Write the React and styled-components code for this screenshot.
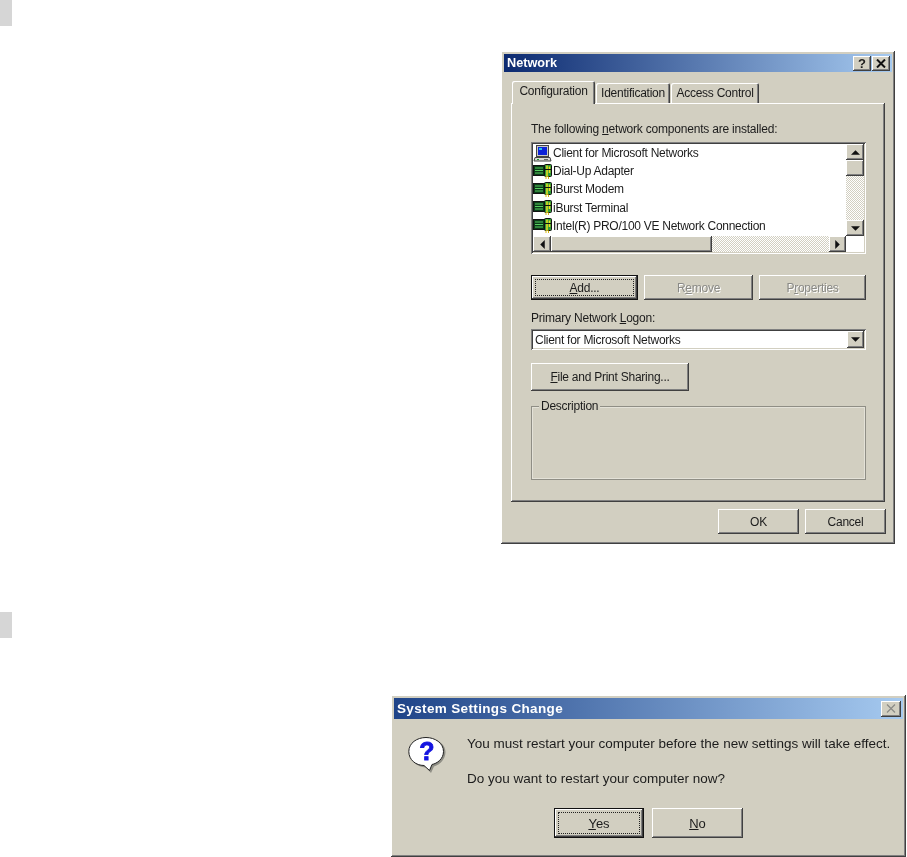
import React from "react";
import styled, { createGlobalStyle } from "styled-components";

const FACE = "#d2cfc1";

const GlobalStyle = createGlobalStyle`
  body {
    margin: 0;
    background: #fff;
    font-family: "Liberation Sans", Arial, sans-serif;
    color: #1c1c1c;
  }
`;

const bevel = `
  box-shadow: inset -1px -1px #404040, inset 1px 1px #fff,
    inset -2px -2px #808080, inset 2px 2px ${FACE};
`;

const sunken = `
  box-shadow: inset 1px 1px #808080, inset -1px -1px #fff,
    inset 2px 2px #404040, inset -2px -2px ${FACE};
`;

const Page = styled.div`
  width: 907px;
  height: 857px;
  overflow: hidden;
`;

const Section = styled.section`
  display: flex;
  justify-content: space-between;
  align-items: flex-start;
  margin-top: ${(p) => p.$top}px;
`;

const Marker = styled.div`
  width: 12px;
  height: 26px;
  background: #d6d6d6;
`;

const Window = styled.div`
  box-sizing: border-box;
  display: flex;
  flex-direction: column;
  width: ${(p) => p.$w}px;
  height: ${(p) => p.$h}px;
  margin-top: ${(p) => p.$top}px;
  margin-right: ${(p) => p.$right}px;
  padding: 3px;
  background: ${FACE};
  filter: blur(0.4px);
  ${bevel}
`;

const TitleBar = styled.div`
  display: flex;
  align-items: center;
  justify-content: space-between;
  flex: none;
  height: ${(p) => p.$h}px;
  padding: 0 2px 0 3px;
  background: linear-gradient(90deg, ${(p) => p.$from}, #a6caf0);
`;

const TitleText = styled.span`
  color: #fff;
  font-weight: bold;
  font-size: ${(p) => p.$size}px;
  letter-spacing: ${(p) => p.$spacing || 0}px;
`;

const TitleButtons = styled.div`
  display: flex;
  gap: 1px;
`;

const TitleButton = styled.div`
  display: flex;
  align-items: center;
  justify-content: center;
  width: ${(p) => p.$w}px;
  height: ${(p) => p.$h}px;
  background: ${FACE};
  font-weight: bold;
  font-size: 13px;
  ${bevel}
`;

const TabStrip = styled.div`
  display: flex;
  align-items: flex-end;
  height: 22px;
  margin-top: 9px;
  padding-left: 8px;
  position: relative;
  z-index: 1;
`;

const Tab = styled.div`
  box-sizing: border-box;
  display: flex;
  align-items: center;
  justify-content: center;
  width: ${(p) => p.$w}px;
  height: ${(p) => (p.$active ? 23 : 20)}px;
  margin-bottom: ${(p) => (p.$active ? -1 : 0)}px;
  margin-right: 1px;
  padding-bottom: ${(p) => (p.$active ? 3 : 0)}px;
  font-size: 12px;
  letter-spacing: -0.25px;
  background: ${FACE};
  border-radius: 2px 2px 0 0;
  box-shadow: inset 1px 1px #fff, inset -1px 0 #404040, inset -2px 0 #808080;
`;

const Panel = styled.div`
  box-sizing: border-box;
  display: flex;
  flex-direction: column;
  height: 399px;
  margin: 0 7px;
  padding: 19px 20px 0;
  ${bevel}
`;

const Label = styled.div`
  height: 14px;
  line-height: 14px;
  font-size: 12px;
  letter-spacing: -0.21px;
  margin-top: ${(p) => p.$top || 0}px;
`;

const ListBox = styled.div`
  box-sizing: border-box;
  display: grid;
  grid-template-columns: 1fr 18px;
  grid-template-rows: 92px 16px;
  width: 335px;
  height: 112px;
  margin-top: 6px;
  padding: 2px;
  background: #fff;
  ${sunken}
`;

const Rows = styled.div`
  display: flex;
  flex-direction: column;
  overflow: hidden;
`;

const Row = styled.div`
  display: flex;
  align-items: center;
  gap: 1px;
  flex: none;
  height: 18.2px;
  font-size: 12px;
  letter-spacing: -0.27px;
  white-space: nowrap;
`;

const ScrollTrack = styled.div`
  display: flex;
  flex-direction: ${(p) => (p.$horizontal ? "row" : "column")};
  background: conic-gradient(#fff 25%, ${FACE} 0 50%, #fff 0 75%, ${FACE} 0) 0 0 / 2px 2px;
`;

const ScrollButton = styled.div`
  display: flex;
  align-items: center;
  justify-content: center;
  flex: none;
  width: ${(p) => p.$w}px;
  height: ${(p) => p.$h}px;
  background: ${FACE};
  margin-top: ${(p) => (p.$end === "v" ? "auto" : 0)};
  margin-left: ${(p) => (p.$end === "h" ? "auto" : 0)};
  ${bevel}
`;

const ButtonRow = styled.div`
  display: flex;
  gap: ${(p) => p.$gap}px;
  justify-content: ${(p) => p.$justify || "flex-start"};
  margin-top: ${(p) => p.$top}px;
`;

const Button = styled.div`
  box-sizing: border-box;
  position: relative;
  display: flex;
  align-items: center;
  justify-content: center;
  flex: none;
  width: ${(p) => p.$w}px;
  height: ${(p) => p.$h}px;
  font-size: ${(p) => p.$size || 12}px;
  letter-spacing: ${(p) => (p.$size ? 0 : -0.25)}px;
  background: ${FACE};
  color: ${(p) => (p.$disabled ? "#8a8a86" : "inherit")};
  text-shadow: ${(p) => (p.$disabled ? "1px 1px #fff" : "none")};
  ${(p) =>
    p.$default
      ? `
    border: 1px solid #111;
    box-shadow: inset -1px -1px #404040, inset 1px 1px #fff, inset -2px -2px #808080;
  `
      : bevel}

  ${(p) =>
    p.$default &&
    `
    &::after {
      content: "";
      position: absolute;
      inset: 3px;
      border: 1px dotted #222;
    }
  `}
`;

const Combo = styled.div`
  box-sizing: border-box;
  display: flex;
  align-items: center;
  justify-content: space-between;
  width: 335px;
  height: 21px;
  margin-top: 4px;
  padding: 2px;
  padding-left: 4px;
  font-size: 12px;
  letter-spacing: -0.27px;
  background: #fff;
  ${sunken}
`;

const Group = styled.fieldset`
  box-sizing: border-box;
  width: 335px;
  height: 74px;
  margin: 15px 0 0;
  padding: 0;
  border: 0;
  position: relative;
  box-shadow: inset 0 0 0 1px #8f8e85, inset 0 0 0 2px #e4e2d8;
`;

const Legend = styled.span`
  position: absolute;
  top: -7px;
  left: 8px;
  padding: 0 2px;
  font-size: 12px;
  letter-spacing: -0.25px;
  line-height: 14px;
  background: ${FACE};
`;

const Footer = styled.div`
  display: flex;
  justify-content: flex-end;
  gap: 6px;
  margin-top: 7px;
  padding-right: 6px;
`;

const Message = styled.div`
  display: flex;
  gap: 21px;
  padding: 18px 0 0 14px;
`;

const MessageText = styled.div`
  margin-top: -1px;
  font-size: 13.5px;
  white-space: nowrap;
  p {
    margin: 0 0 20px;
    line-height: 15px;
  }
`;

const Arrow = ({ dir }) => {
  const points = {
    up: "4,1 0,5 8,5",
    down: "0,1 8,1 4,5",
    left: "5,0 5,8 1,4",
    right: "1,0 1,8 5,4",
  }[dir];
  return (
    <svg width="9" height="9" viewBox="0 0 8 8" style={{ display: "block" }}>
      <polygon points={points} fill="#111" transform={dir === "up" || dir === "down" ? "translate(0 1)" : "translate(1 0)"} />
    </svg>
  );
};

const CloseGlyph = ({ muted }) => (
  <svg width="10" height="9" viewBox="0 0 10 9">
    <path d="M1 0.5L9 8.5M9 0.5L1 8.5" stroke={muted ? "#8a8a86" : "#111"} strokeWidth={muted ? 1.2 : 2} fill="none" />
  </svg>
);

const ComputerIcon = () => (
  <svg width="19" height="17" viewBox="0 0 19 17" style={{ flex: "none" }}>
    <rect x="3.5" y="0.5" width="12" height="11" fill="#c9c9c4" stroke="#444" />
    <rect x="5" y="2" width="9" height="8" fill="#0c22d8" />
    <rect x="6" y="3" width="3" height="2" fill="#26c6e8" />
    <path d="M2 12.5H17L18 16H1Z" fill="#dcdcd6" stroke="#444" />
    <rect x="4" y="14" width="2" height="1" fill="#1a9a2a" />
    <rect x="11" y="14" width="4" height="1" fill="#666" />
  </svg>
);

const AdapterIcon = () => (
  <svg width="19" height="15" viewBox="0 0 19 15" style={{ flex: "none" }}>
    <rect x="0.5" y="1.5" width="11" height="10" fill="#0a3a18" stroke="#111" />
    <path d="M2 4H10M2 6.5H10M2 9H10" stroke="#58d060" strokeWidth="1.2" />
    <rect x="11.5" y="0.5" width="7" height="12" rx="1" fill="#2f9a3a" stroke="#111" />
    <path d="M14 1.5V13M16.5 2.5V9" stroke="#f0e020" strokeWidth="1.5" />
    <path d="M12 5.5H18" stroke="#111" strokeWidth="1" />
    <path d="M13 12.5V15M15.5 12.5V15" stroke="#d8b810" strokeWidth="1" />
  </svg>
);

const QuestionIcon = () => (
  <svg width="38" height="36" viewBox="0 0 38 36" style={{ flex: "none", display: "block" }}>
    <path
      d="M20 1.5C31 1.5 37.5 8 37.5 15C37.5 23 31 28 26 29.5L23 36L18 30.5C9 30 2 24 2 15C2 7 10 1.5 20 1.5Z"
      fill="#8f8e85"
    />
    <path
      d="M18 0.5C27 0.5 35.5 6 35.5 14.5C35.5 22 29 26.5 24 27.5L21.5 33.5L16 28.5C8 28.5 0.8 23 0.8 14.5C0.8 6 9 0.5 18 0.5Z"
      fill="#fff"
      stroke="#222"
      strokeWidth="1"
    />
    <text x="19" y="23" textAnchor="middle" fontFamily="Liberation Sans, sans-serif" fontWeight="bold" fontSize="25" stroke="#1414e0" strokeWidth="0.8" fill="#1414e0">
      ?
    </text>
  </svg>
);

const components = [
  { name: "Client for Microsoft Networks", Icon: ComputerIcon },
  { name: "Dial-Up Adapter", Icon: AdapterIcon },
  { name: "iBurst Modem", Icon: AdapterIcon },
  { name: "iBurst Terminal", Icon: AdapterIcon },
  { name: "Intel(R) PRO/100 VE Network Connection", Icon: AdapterIcon },
];

const App = () => {
  return (
    <Page>
      <GlobalStyle />
      <Section $top={0}>
        <Marker />
        <Window $w={394} $h={493} $top={51} $right={12}>
          <TitleBar $h={18} $from="#0c2a70">
            <TitleText $size={12.7}>Network</TitleText>
            <TitleButtons>
              <TitleButton $w={18} $h={15}>?</TitleButton>
              <TitleButton $w={18} $h={15}>
                <CloseGlyph />
              </TitleButton>
            </TitleButtons>
          </TitleBar>
          <TabStrip>
            <Tab $active $w={83}>Configuration</Tab>
            <Tab $w={74}>Identification</Tab>
            <Tab $w={88}>Access Control</Tab>
          </TabStrip>
          <Panel>
            <Label>
              The following <u>n</u>etwork components are installed:
            </Label>
            <ListBox>
              <Rows>
                {components.map(({ name, Icon }) => (
                  <Row key={name}>
                    <Icon />
                    {name}
                  </Row>
                ))}
              </Rows>
              <ScrollTrack>
                <ScrollButton $w={18} $h={16}>
                  <Arrow dir="up" />
                </ScrollButton>
                <ScrollButton $w={18} $h={16} />
                <ScrollButton $w={18} $h={16} $end="v">
                  <Arrow dir="down" />
                </ScrollButton>
              </ScrollTrack>
              <ScrollTrack $horizontal>
                <ScrollButton $w={18} $h={16}>
                  <Arrow dir="left" />
                </ScrollButton>
                <ScrollButton $w={161} $h={16} />
                <ScrollButton $w={17} $h={16} $end="h">
                  <Arrow dir="right" />
                </ScrollButton>
              </ScrollTrack>
            </ListBox>
            <ButtonRow $gap={6} $top={21}>
              <Button $default $w={107} $h={25}>
                <span>
                  <u>A</u>dd...
                </span>
              </Button>
              <Button $disabled $w={109} $h={25}>
                <span>
                  R<u>e</u>move
                </span>
              </Button>
              <Button $disabled $w={107} $h={25}>
                <span>
                  P<u>r</u>operties
                </span>
              </Button>
            </ButtonRow>
            <Label $top={11}>
              Primary Network <u>L</u>ogon:
            </Label>
            <Combo>
              Client for Microsoft Networks
              <ScrollButton $w={17} $h={17}>
                <Arrow dir="down" />
              </ScrollButton>
            </Combo>
            <ButtonRow $gap={0} $top={13}>
              <Button $w={158} $h={28}>
                <span>
                  <u>F</u>ile and Print Sharing...
                </span>
              </Button>
            </ButtonRow>
            <Group>
              <Legend>Description</Legend>
            </Group>
          </Panel>
          <Footer>
            <Button $w={81} $h={25}>OK</Button>
            <Button $w={81} $h={25}>Cancel</Button>
          </Footer>
        </Window>
      </Section>
      <Section $top={68}>
        <Marker />
        <Window $w={515} $h={162} $top={83} $right={1}>
          <TitleBar $h={21} $from="#1f4488">
            <TitleText $size={13.5} $spacing={0.35}>System Settings Change</TitleText>
            <TitleButton $w={20} $h={16}>
              <CloseGlyph muted />
            </TitleButton>
          </TitleBar>
          <Message>
            <QuestionIcon />
            <MessageText>
              <p>You must restart your computer before the new settings will take effect.</p>
              <p>Do you want to restart your computer now?</p>
            </MessageText>
          </Message>
          <ButtonRow $gap={8} $top={2} $justify="center">
            <Button $default $w={90} $h={30} $size={13}>
              <span>
                <u>Y</u>es
              </span>
            </Button>
            <Button $w={91} $h={30} $size={13}>
              <span>
                <u>N</u>o
              </span>
            </Button>
          </ButtonRow>
        </Window>
      </Section>
    </Page>
  );
};

export default App;
